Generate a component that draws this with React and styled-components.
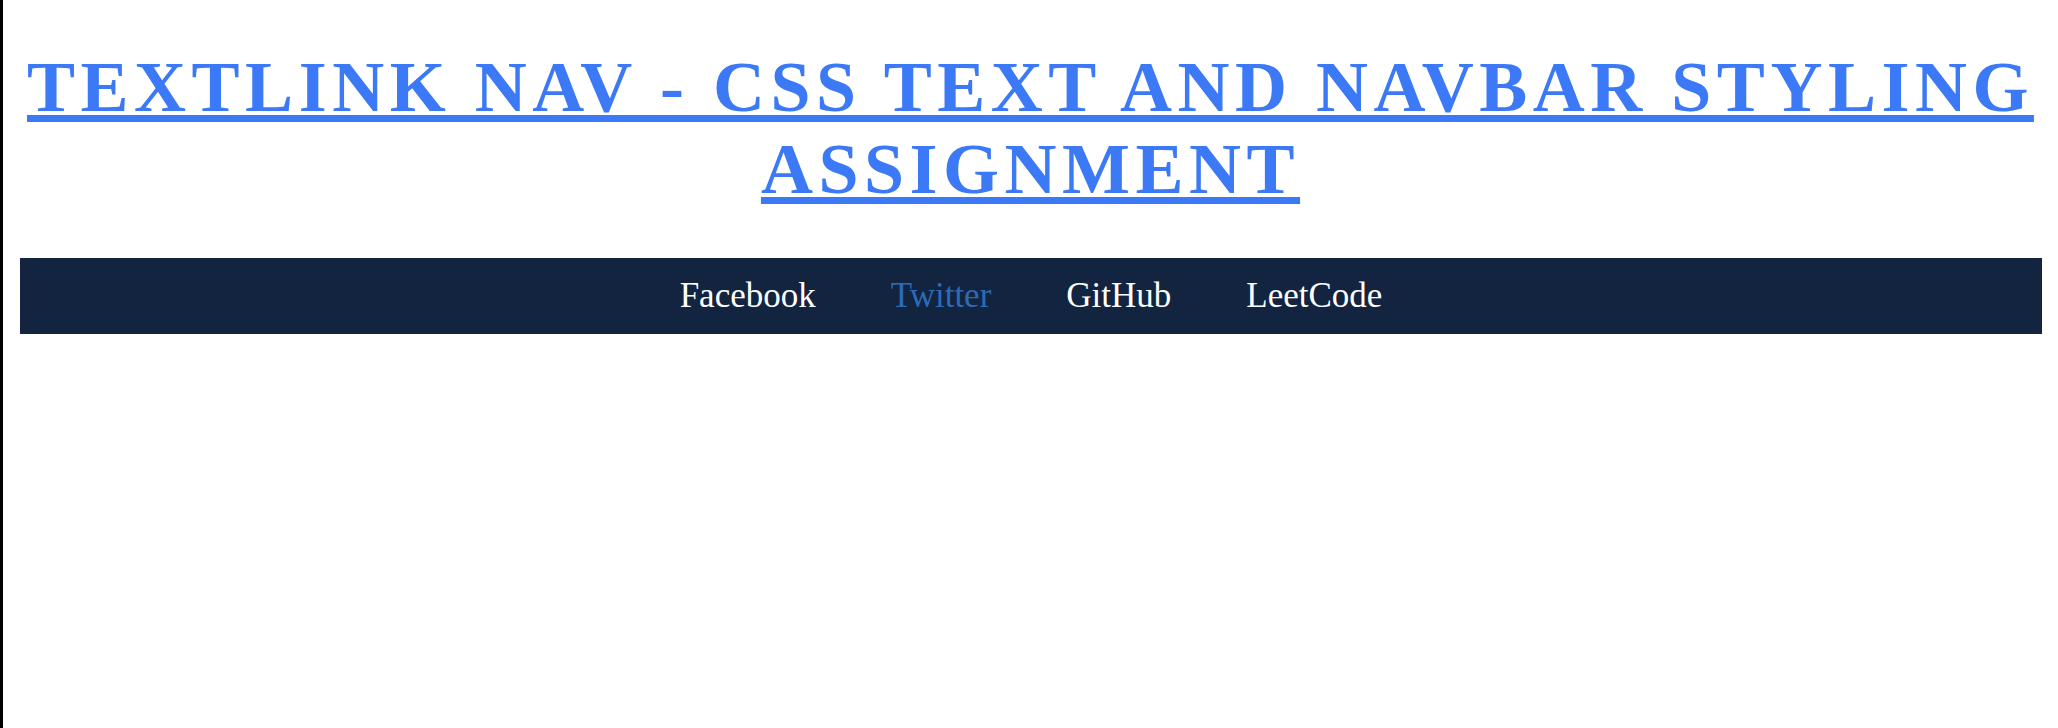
import React from 'react';
import styled, { createGlobalStyle } from 'styled-components';

const links = [
  { id: 'facebook', title: 'Facebook' },
  { id: 'twitter', title: 'Twitter', active: true },
  { id: 'github', title: 'GitHub' },
  { id: 'leetcode', title: 'LeetCode' },
];

const GlobalStyle = createGlobalStyle`
  html {
    min-height: 100vh;
    box-sizing: border-box;
    border-left: 3px solid #000;
    background: #fff;
  }
  body {
    margin: 0;
    padding: 0 8px;
    font-family: "Liberation Serif", "Times New Roman", serif;
  }
`;

function App() {
  return (
    <>
      <GlobalStyle />
      <Title>TEXTLINK NAV - CSS TEXT AND NAVBAR STYLING ASSIGNMENT</Title>

      <NavBar>
        {links.map((item) => (
          <NavLink key={item.id} href="#" $active={item.active}>
            {item.title}
          </NavLink>
        ))}
      </NavBar>
    </>
  );
}

const Title = styled.h1`
  margin: 46px 0 48px;
  font-size: 72px;
  line-height: 82px;
  font-weight: 700;
  letter-spacing: 5.5px;
  text-align: center;
  color: #3b79f6;
  text-decoration: underline;
  text-decoration-thickness: 7px;
  text-underline-offset: 4px;
`;

const NavBar = styled.nav`
  margin: 0 8px 0 9px;
  padding: 18px 0;
  background: #12243f;
  display: flex;
  justify-content: center;
  gap: 75px;
`;

const NavLink = styled.a`
  font-size: 35px;
  line-height: 40px;
  color: ${(p) => (p.$active ? '#2d6bb6' : '#ffffff')};
  text-decoration: none;
`;

export default App;
